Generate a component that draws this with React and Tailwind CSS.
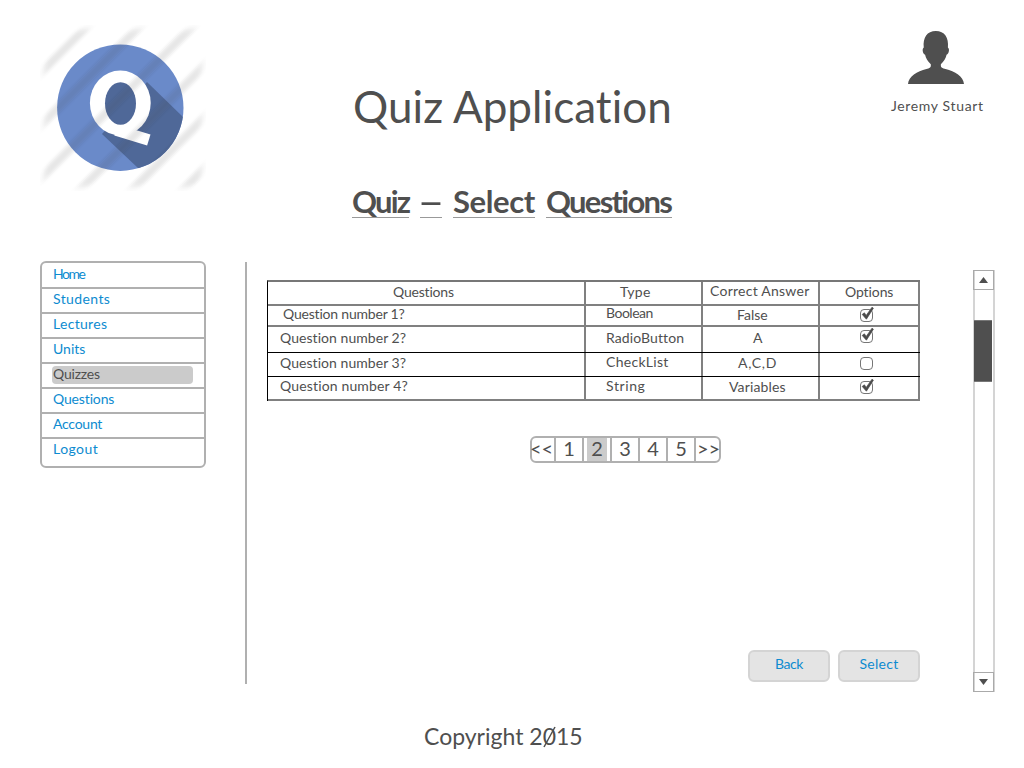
import React from 'react';

const stripes = [48.5, 101, 154, 205, 257, 308];

function Logo() {
  return (
    <svg className="ml-10 mt-[25px] h-[166px] w-[166px] shrink-0" viewBox="0 0 166 166">
      <defs>
        <clipPath id="disc"><circle cx="80.3" cy="82.7" r="63.2" /></clipPath>
        <filter id="soft" x="-20%" y="-20%" width="140%" height="140%"><feGaussianBlur stdDeviation="1.4" /></filter>
        <filter id="fade"><feGaussianBlur stdDeviation="3" /></filter>
        <filter id="edge"><feGaussianBlur stdDeviation="0.5" /></filter>
        <mask id="frame"><rect x="4" y="4" width="158" height="158" fill="#fff" filter="url(#fade)" /></mask>
      </defs>
      <g filter="url(#edge)">
        <circle cx="80.3" cy="82.7" r="63.2" fill="#6a8ac9" />
        <polygon points="107,57 143,92 150,150 98,143 62,109" fill="#4f6798" clipPath="url(#disc)" />
        <ellipse cx="80.3" cy="78" rx="30.4" ry="32.6" fill="#fff" />
        <line x1="76" y1="105" x2="108.8" y2="115" stroke="#fff" strokeWidth="11.5" />
        <ellipse cx="80.5" cy="78.5" rx="15.5" ry="21.3" fill="#4f6798" />
      </g>
      <g mask="url(#frame)">
        <g stroke="#50503c" strokeOpacity="0.13" strokeWidth="8" filter="url(#soft)">
          {stripes.map((s) => <line key={s} x1={s + 20} y1="-20" x2={s - 190} y2="190" />)}
        </g>
      </g>
    </svg>
  );
}

function UserIcon() {
  return (
    <svg className="ml-[17px] mt-[31px] h-[53px] w-[56px]" viewBox="115 32 167 160" preserveAspectRatio="none" fill="#4f4f4f">
      <path d="M115 192C117 170 142 154 170 147Q183 144 183 138V132C174 125 168 114 166 104C159 101 156 86 162 82C159 52 172 32 198 32C224 32 237 52 234 82C240 86 237 101 230 104C228 114 222 125 213 132V138Q213 144 227 147C255 154 280 170 282 192Z" />
    </svg>
  );
}

const menu = [
  ['Home', 'tracking-[-1.5px]'],
  ['Students', 'tracking-[0.4px]'],
  ['Lectures', 'tracking-[0.3px]'],
  ['Units', 'tracking-[0px]'],
  ['Quizzes', 'tracking-[-0.2px]'],
  ['Questions', 'tracking-[-0.15px]'],
  ['Account', 'tracking-[-0.25px]'],
  ['Logout', 'tracking-[0.45px]'],
];

function Sidebar() {
  return (
    <nav className="ml-10 h-[207px] w-[166px] shrink-0 rounded-[6px] border-2 border-[#b0b0b0]">
      {menu.map(([label, track], i) => (
        <div key={label} className={`${i === 0 ? 'h-[26px]' : 'h-[25px]'} ${i < 7 ? 'border-b-2 border-[#b0b0b0]' : ''} pl-[11px]`}>
          {label === 'Quizzes' ? (
            <div className="-ml-px flex h-full items-start pt-[2px]">
              <div className={`h-[18px] w-[141px] rounded-[4px] bg-[#cbcbcb] pl-px leading-[16px] ${track}`}>{label}</div>
            </div>
          ) : (
            <div className={`leading-5 text-[#0d8bd0] ${i === 0 ? 'pt-px' : ''} ${track}`}>{label}</div>
          )}
        </div>
      ))}
    </nav>
  );
}

function Checkbox({ checked }) {
  return (
    <svg className="h-[13px] w-[13px] overflow-visible" viewBox="0 0 13 13" fill="none">
      <rect x="0.5" y="0.5" width="12" height="12" rx="3.5" stroke="#666" strokeWidth="0.9" />
      {checked && <path d="M2.2 5.4L4.4 3.8L6.2 6.4L12 -1.8L13.4 -0.8L6.4 10.2Z" fill="#4a4a4a" stroke="#4a4a4a" strokeWidth="0.7" />}
    </svg>
  );
}

const rows = [
  { h: 'h-[24px]', line: 'border-b-2 border-[#808080]', cells: [
    ['Questions', 'pl-[125px] pt-[2px] tracking-[-0.2px]'],
    ['Type', 'pl-[34px] pt-[2px] tracking-[0.3px]'],
    ['Correct Answer', 'pl-[7px] pt-[1px] tracking-[0.25px]'],
    ['Options', 'pl-[25px] pt-[2px] tracking-[-0.1px]']] },
  { h: 'h-[21px]', line: 'border-b-2 border-[#808080]', cells: [
    ['Question number 1?', 'pl-[15px] tracking-[-0.2px]'],
    ['Boolean', 'pl-[20px] -mt-px tracking-[-0.5px]'],
    ['False', 'pl-[34px] pt-[1px] tracking-[0px]'],
    [true, 'pl-[40px] pt-[3px]']] },
  { h: 'h-[26px]', line: 'border-b border-black', cells: [
    ['Question number 2?', 'pl-[12px] pt-[3px] tracking-[0.05px]'],
    ['RadioButton', 'pl-[20px] pt-[3px] tracking-[0.1px]'],
    ['A', 'pl-[50px] pt-[3px]'],
    [true, 'pl-[40px] pt-[3px]']] },
  { h: 'h-[24px]', line: 'border-b border-black', cells: [
    ['Question number 3?', 'pl-[12px] pt-[2px] tracking-[0.05px]'],
    ['CheckList', 'pl-[20px] pt-[1px] tracking-[0.3px]'],
    ['A,C,D', 'pl-[35px] pt-[2px] tracking-[0.7px]'],
    [false, 'pl-[40px] pt-[4px]']] },
  { h: 'h-[24px]', line: 'border-b-2 border-[#808080]', cells: [
    ['Question number 4?', 'pl-[12px] pt-[1px] tracking-[0.15px]'],
    ['String', 'pl-[20px] pt-[1px] tracking-[0.6px]'],
    ['Variables', 'pl-[26px] pt-[2px] tracking-[0.15px]'],
    [true, 'pl-[40px] pt-[4px]']] },
];
const cols = ['w-[318px]', 'w-[117px]', 'w-[117px]', 'w-[100px]'];

function QuestionTable() {
  return (
    <div className="w-[653px] border-l border-t-2 border-l-black border-t-[#777]">
      {rows.map((r, i) => (
        <div key={i} className={`flex ${r.h} ${r.line}`}>
          {r.cells.map(([value, pos], j) => (
            <div key={j} className={`${cols[j]} shrink-0 border-r-2 border-[#808080]`}>
              <div className={`whitespace-nowrap leading-4 ${pos}`}>
                {typeof value === 'string' ? value : <Checkbox checked={value} />}
              </div>
            </div>
          ))}
        </div>
      ))}
    </div>
  );
}

function Pagination() {
  const cell = 'flex w-[28px] justify-center border-r-2 border-[#b0b0b0]';
  return (
    <div className="ml-[263px] mt-[35px] flex h-[27px] w-[191px] rounded-[6px] border-2 border-[#b0b0b0] text-[20px] leading-5">
      <div className="flex w-[24px] justify-center whitespace-nowrap border-r-2 border-[#b0b0b0]"><span className="-ml-[3px]">&lt;&lt;</span></div>
      <div className={cell}>1</div>
      <div className={cell}><span className="h-full w-5 bg-[#cbcbcb] text-center">2</span></div>
      <div className={cell}>3</div>
      <div className={cell}>4</div>
      <div className={cell}>5</div>
      <div className="flex w-[23px] justify-center whitespace-nowrap"><span className="-mr-[2px]">&gt;&gt;</span></div>
    </div>
  );
}

function Scrollbar() {
  return (
    <div className="mt-[9px] flex h-[422px] w-[22px] shrink-0 flex-col border-x-2 border-[#d4d4d4]">
      <div className="-ml-[2px] -mr-px flex h-[20px] items-center justify-center border border-[#aaa]">
        <svg width="9" height="6" viewBox="0 0 9 6"><path d="M4.5 0L9 6H0Z" fill="#4f4f4f" /></svg>
      </div>
      <div className="-ml-px mt-[30px] h-[62px] w-[18px] border-y border-[#777] bg-[#4f4f4f]" />
      <div className="-ml-[2px] -mr-px mt-auto flex h-[20px] items-center justify-center border border-[#aaa]">
        <svg width="9" height="6" viewBox="0 0 9 6"><path d="M4.5 6L9 0H0Z" fill="#4f4f4f" /></svg>
      </div>
    </div>
  );
}

export default function App() {
  const word = 'h-[33px] border-b border-[#999] text-[31px] font-bold leading-8 whitespace-nowrap';
  const button = 'h-8 w-[82px] rounded-[6px] border-2 border-[#d4d4d4] bg-[#e4e4e4] pb-[4px] text-center leading-4 text-[#0d8bd0]';
  return (
    <div className="h-[768px] w-[1024px] overflow-hidden bg-white font-['Lato',sans-serif] text-[14px] text-[#4f4f4f] [font-variant-ligatures:none]">
      <header className="flex h-[261px]">
        <Logo />
        <div className="ml-[146px] w-[321px] shrink-0">
          <h1 className="mt-[82px] whitespace-nowrap pl-px text-[44px] leading-[48px] tracking-[0.05px]">Quiz Application</h1>
          <h2 className="mt-[55px] flex">
            <span className={`${word} w-[57px] tracking-[-1.8px]`}>Quiz</span>
            <span className={`${word} ml-[11px] w-[22px] text-center`}><span className="inline-block scale-x-150">–</span></span>
            <span className={`${word} ml-[11px] w-[82px] tracking-[-0.4px]`}>Select</span>
            <span className={`${word} ml-[11px] w-[126px] tracking-[-1.75px]`}>Questions</span>
          </h2>
        </div>
        <div className="ml-[218px] w-[100px]">
          <UserIcon />
          <div className="mt-3 whitespace-nowrap leading-5 tracking-[0.65px]">Jeremy Stuart</div>
        </div>
      </header>
      <div className="flex h-[431px]">
        <Sidebar />
        <div className="ml-[39px] mt-px h-[422px] w-[2px] shrink-0 bg-[#b0b0b0]" />
        <main className="w-[726px] shrink-0 pl-5 pt-[19px]">
          <QuestionTable />
          <Pagination />
          <div className="ml-[481px] mt-[187px] flex gap-2">
            <button className={`${button} tracking-[-0.4px]`}>Back</button>
            <button className={`${button} tracking-[0.3px]`}>Select</button>
          </div>
        </main>
        <Scrollbar />
      </div>
      <footer className="ml-[424px] mt-8 whitespace-nowrap text-[23px] leading-6">
        Copyright 2<span className="relative">0<svg className="absolute left-[-2px] top-[3px] h-[24px] w-[17px]" viewBox="0 0 17 24"><line x1="3" y1="22" x2="14" y2="2" stroke="#4f4f4f" strokeWidth="1.5" /></svg></span>15
      </footer>
    </div>
  );
}
